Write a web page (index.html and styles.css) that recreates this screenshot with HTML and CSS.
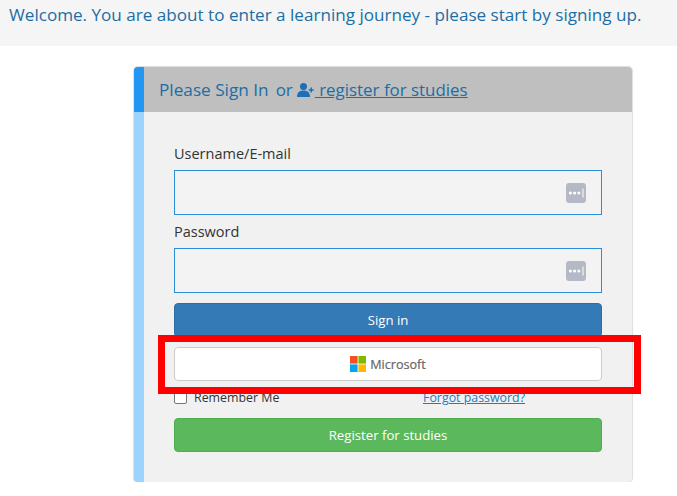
FILE: index.html
```html
<!DOCTYPE html>
<html lang="en">
<head>
    <meta charset="UTF-8">
    <meta name="viewport" content="width=device-width, initial-scale=1.0">
    <title>Sign In</title>
    <link rel="stylesheet" href="styles.css">
</head>
<body>
    <div class="welcome">Welcome. You are about to enter a learning journey - please start by signing up.</div>

    <div class="card">
        <div class="card-head">
            <span class="head-title">Please Sign In</span>
            <span class="head-or">or</span>
            <a href="#" class="head-link"><svg class="user-icon" viewBox="0 0 18 14" width="18" height="14"><circle cx="6.5" cy="3.6" r="3.5" fill="#1c6fb8"/><path d="M0 14c0-4.6 2.2-6.6 6.5-6.6S13 9.4 13 14z" fill="#1c6fb8"/><path d="M14.2 4.5v5M11.7 7h5" stroke="#1c6fb8" stroke-width="1.5" fill="none"/></svg> register for studies</a>
        </div>
        <div class="card-body">
            <label class="field-label">Username/E-mail</label>
            <div class="field">
                <span class="key-icon"><svg viewBox="0 0 20 20" width="20" height="20"><rect width="20" height="20" rx="3" fill="#b5b9c6"/><circle cx="4.4" cy="10" r="1.5" fill="#fff"/><circle cx="8.6" cy="10" r="1.5" fill="#fff"/><circle cx="12.8" cy="10" r="1.5" fill="#fff"/><path d="M17 5.5v9" stroke="#fff" stroke-width="1"/></svg></span>
            </div>
            <label class="field-label second">Password</label>
            <div class="field">
                <span class="key-icon"><svg viewBox="0 0 20 20" width="20" height="20"><rect width="20" height="20" rx="3" fill="#b5b9c6"/><circle cx="4.4" cy="10" r="1.5" fill="#fff"/><circle cx="8.6" cy="10" r="1.5" fill="#fff"/><circle cx="12.8" cy="10" r="1.5" fill="#fff"/><path d="M17 5.5v9" stroke="#fff" stroke-width="1"/></svg></span>
            </div>
            <button class="btn btn-blue">Sign in</button>
            <button class="btn btn-ms">
                <svg viewBox="0 0 16 16" width="16" height="16"><rect width="7.6" height="7.6" fill="#f25022"/><rect x="8.4" width="7.6" height="7.6" fill="#7fba00"/><rect y="8.4" width="7.6" height="7.6" fill="#00a4ef"/><rect x="8.4" y="8.4" width="7.6" height="7.6" fill="#ffb900"/></svg>
                <span>Microsoft</span>
            </button>
            <div class="options">
                <label class="remember"><span class="checkbox"></span>Remember Me</label>
                <a href="#" class="forgot">Forgot password?</a>
            </div>
            <button class="btn btn-green">Register for studies</button>
        </div>
        <div class="highlight"></div>
    </div>
</body>
</html>
```

FILE: styles.css
```css
* {
    box-sizing: border-box;
}
body {
    margin: 0;
    font-family: "Open Sans", "Noto Sans", Arial, sans-serif;
    background-color: white;
    color: #333;
}
.welcome {
    height: 46px;
    padding: 3px 9px 0;
    background-color: #f5f5f5;
    color: #1c6ea4;
    font-size: 17.1px;
    line-height: 24px;
    white-space: nowrap;
}
.card {
    position: relative;
    width: 498px;
    height: 415px;
    margin: 21px 0 0 134px;
    border-radius: 4px;
    border-left: 10px solid #9cd3ff;
    background-color: #f1f1f1;
    box-shadow: 0 0 1px 1px #dddddd;
}
.card-head {
    display: flex;
    align-items: center;
    height: 45px;
    margin-left: -10px;
    padding-left: 15px;
    border-left: 10px solid #2196f3;
    border-radius: 4px 4px 0 0;
    background-color: #bfbfbf;
    color: #1c6ea4;
    font-size: 17px;
}
.head-title {
    font-size: 17.2px;
}
.head-or {
    margin-left: 7px;
    margin-right: 4px;
}
.head-link {
    font-size: 16.9px;
    color: #1c6ea4;
}
.user-icon {
    vertical-align: -1px;
}
.card-body {
    display: flex;
    flex-direction: column;
    padding: 30px 30px 0 30px;
}
.field-label {
    height: 28px;
    padding-top: 2px;
    font-size: 14.5px;
    line-height: 20px;
    color: #333;
}
.field-label.second {
    margin-top: 5px;
}
.field {
    display: flex;
    align-items: center;
    justify-content: flex-end;
    height: 45px;
    padding-right: 15px;
    border: 1px solid #2b8fd8;
    background-color: #f3f3f3;
}
.key-icon {
    display: flex;
    height: 20px;
}
.btn {
    display: flex;
    align-items: center;
    justify-content: center;
    width: 100%;
    height: 34px;
    border-radius: 4px;
    border: 1px solid transparent;
    font-family: inherit;
    font-size: 13.2px;
}
.btn-blue {
    margin-top: 10px;
    background-color: #337ab7;
    border-color: #2e6da4;
    color: white;
}
.btn-ms {
    gap: 4px;
    margin-top: 10px;
    background-color: white;
    border-color: #cccccc;
    color: #666;
    font-size: 12.6px;
}
.btn-ms span {
    -webkit-text-stroke: 0.2px #666;
}
.options {
    display: flex;
    height: 37px;
    padding-top: 8px;
    font-size: 12.4px;
    line-height: 18px;
}
.remember {
    display: flex;
    width: 249px;
    color: #333;
}
.checkbox {
    width: 13px;
    height: 13px;
    margin: 2px 7px 0 0;
    border: 1px solid #767676;
    border-radius: 2px;
    background-color: white;
}
.forgot {
    color: #1c7cc4;
}
.btn-green {
    background-color: #5cb85c;
    border-color: #4cae4c;
    color: white;
}
.highlight {
    position: absolute;
    left: 14px;
    top: 268px;
    width: 483px;
    height: 59px;
    border: 7px solid #ff0000;
}
```
